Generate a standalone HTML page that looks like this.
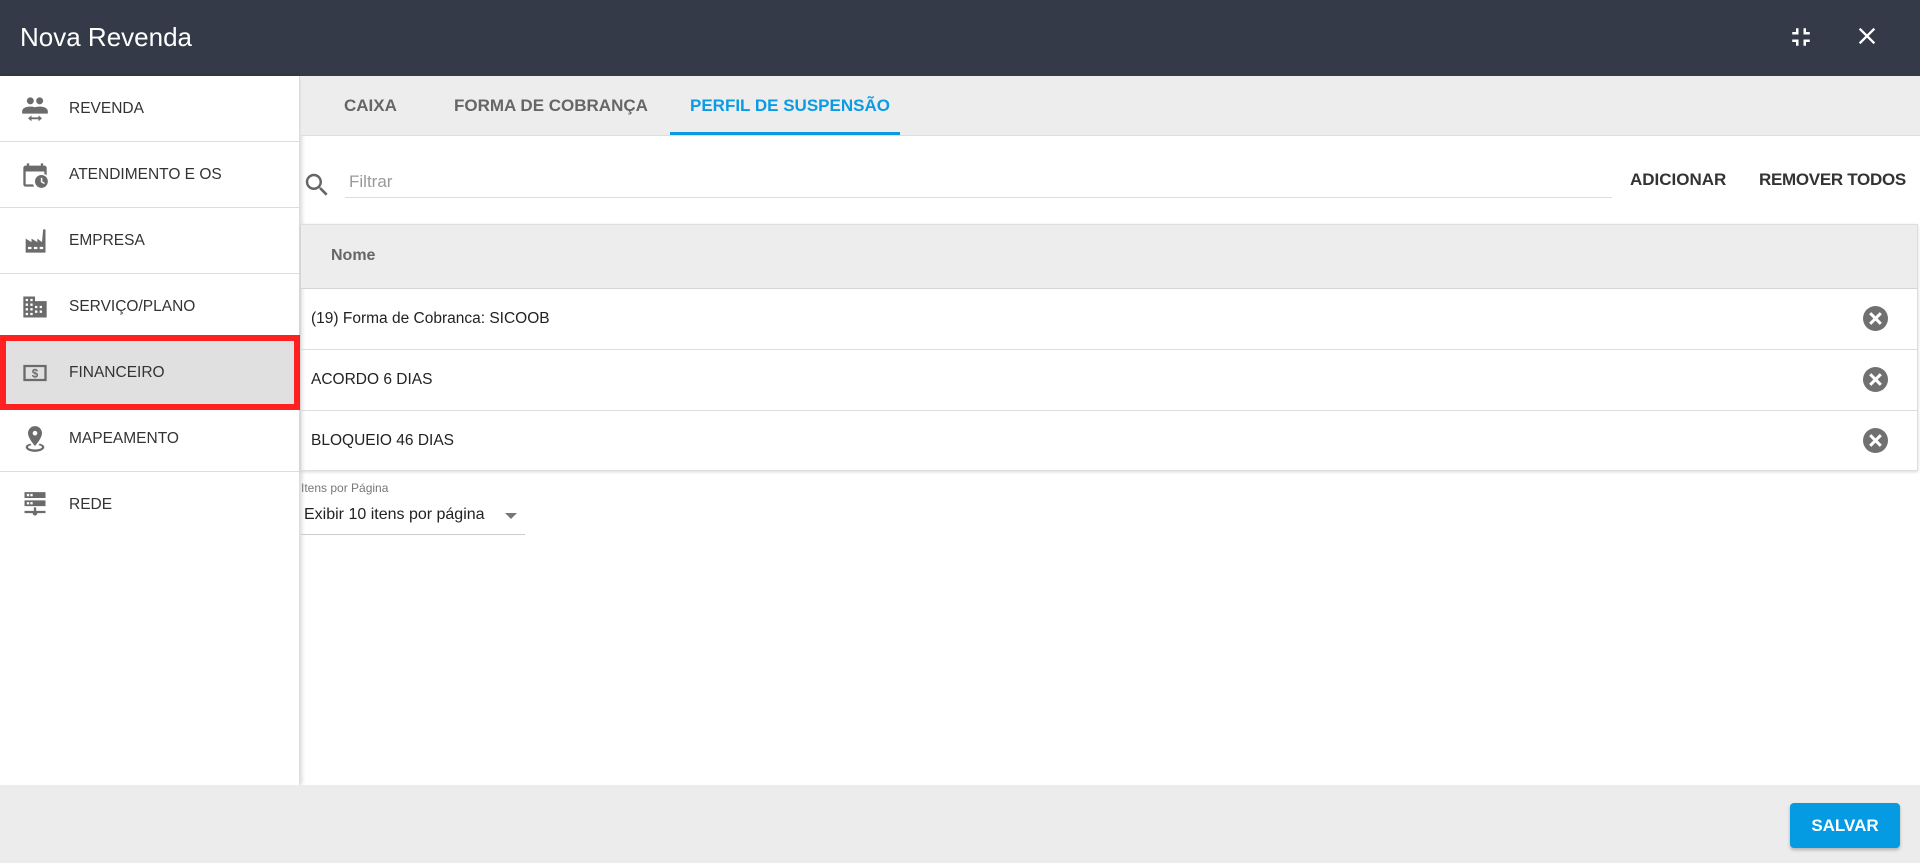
<!DOCTYPE html>
<html><head><meta charset="utf-8"><style>
*{box-sizing:border-box;margin:0;padding:0}
body{width:1920px;height:863px;overflow:hidden;font-family:"Liberation Sans",sans-serif;background:#fff;position:relative;color:#212121}
.hdr{position:absolute;left:0;top:0;width:1920px;height:76px;background:#353a48}
.hdr .t{position:absolute;left:20px;top:22px;font-size:26px;color:#fff}
.side{position:absolute;left:0;top:76px;width:300px;height:709px;background:#fff;border-right:1px solid #ddd;box-shadow:2px 0 4px rgba(0,0,0,.15)}
.it{position:absolute;left:0;width:300px;height:66px;border-bottom:1px solid #ddd}
.it svg{position:absolute;left:21px;top:19px;width:28px;height:28px;fill:#6b6b6b}
.it span{position:absolute;left:69px;top:24px;font-size:15.5px;color:#333}
.sel{position:absolute;left:0;top:259px;width:300px;height:75px;border:6px solid #ff2020;background:#e0e0e0}
.tabs{position:absolute;left:301px;top:76px;width:1619px;height:60px;background:#ededed;border-bottom:1px solid #ddd}
.tab{position:absolute;top:96px;font-size:17px;color:#666;font-weight:bold}
.ul{position:absolute;left:670px;top:132px;width:230px;height:3px;background:#0a9be3}
.btn{position:absolute;top:170px;font-size:17px;font-weight:bold;color:#333}
.tbl{position:absolute;left:301px;top:224px;width:1617px;height:247px;border:1px solid #ddd;border-left:none;box-shadow:0 1px 3px rgba(0,0,0,.15)}
.th{height:64px;background:#ededed;border-bottom:1px solid #d4d4d4;position:relative}
.th span{position:absolute;left:30px;top:22px;font-size:16px;font-weight:bold;color:#666}
.tr{height:61px;border-bottom:1px solid #ddd;position:relative}
.tr span{position:absolute;left:10px;top:21px;font-size:15.5px;color:#222}
.tr i{position:absolute;left:1562px;top:17px;width:25px;height:25px;border-radius:50%;background:#707070}
.tr i:before,.tr i:after{content:"";position:absolute;left:11px;top:5px;width:3px;height:15px;background:#fff;transform:rotate(45deg)}
.tr i:after{transform:rotate(-45deg)}
.foot{position:absolute;left:0;top:785px;width:1920px;height:78px;background:#ececec}
.save{position:absolute;left:1790px;top:803px;width:110px;height:45px;background:#049be3;border-radius:4px;color:#fff;font-weight:bold;font-size:17px;text-align:center;line-height:45px;box-shadow:0 2px 3px rgba(0,0,0,.25)}
</style></head><body>
<div class="hdr"><div class="t">Nova Revenda</div>
<svg style="position:absolute;left:1786px;top:22px" width="30" height="30" viewBox="0 0 24 24" fill="#fff"><path d="M5 16h3v3h2v-5H5v2zm3-8H5v2h5V5H8v3zm6 11h2v-3h3v-2h-5v5zm2-11V5h-2v5h5V8h-3z"/></svg>
<svg style="position:absolute;left:1853px;top:22px" width="28" height="28" viewBox="0 0 24 24" fill="#fff"><path d="M19 6.41L17.59 5 12 10.59 6.41 5 5 6.41 10.59 12 5 17.59 6.41 19 12 13.41 17.59 19 19 17.59 13.41 12z"/></svg>
</div>
<div class="side">
<div class="it" style="top:0"><svg viewBox="0 0 24 24"><circle cx="8" cy="5" r="3"/><circle cx="16" cy="5" r="3"/><path d="M1 14c0-3 4-4 7-4s4 .6 4 .6.9-.6 4-.6 7 1 7 4v2H1z"/><path d="M6 20l3-2.5v1.7h6v-1.7l3 2.5-3 2.5v-1.7H9v1.7z"/></svg><span>REVENDA</span></div>
<div class="it" style="top:66px"><svg viewBox="0 0 24 24"><path d="M17 2v2H7V2H5v2H4c-1.1 0-2 .9-2 2v14c0 1.1.9 2 2 2h7.3a7 7 0 0 1-.9-2H4V9h16v2.3a7 7 0 0 1 2 .9V6c0-1.1-.9-2-2-2h-1V2z"/><circle cx="17.5" cy="17.5" r="5.5"/><path d="M17 14.5h1.3v3l2.2 1.3-.6 1-2.9-1.7z" fill="#fff"/></svg><span>ATENDIMENTO E OS</span></div>
<div class="it" style="top:132px"><svg viewBox="0 0 24 24"><path d="M21 2h-2l-1 11-4-3v3L9 10v3L4 10v12h17zM6 17h3v2H6zm5 0h3v2h-3zm5 0h3v2h-3z" fill-rule="evenodd"/></svg><span>EMPRESA</span></div>
<div class="it" style="top:198px"><svg viewBox="0 0 24 24"><path d="M2 3h10v4h10v14H2zM4 5v2h2V5zm4 0v2h2V5zM4 9v2h2V9zm4 0v2h2V9zm4 2v2h2v-2zm4 0v2h2v-2zM4 13v2h2v-2zm4 0v2h2v-2zm4 2v2h2v-2zm4 0v2h2v-2zM4 17v2h2v-2zm4 0v2h2v-2z" fill-rule="evenodd"/></svg><span>SERVIÇO/PLANO</span></div>
<div class="sel"></div>
<div class="it" style="top:264px;border:none"><svg viewBox="0 0 24 24"><path d="M2 5h20v14H2zm2 2v10h16V7z" fill-rule="evenodd"/><text x="12" y="16" font-size="10" font-weight="bold" text-anchor="middle" font-family="Liberation Sans" fill="#6b6b6b">$</text></svg><span>FINANCEIRO</span></div>
<div class="it" style="top:330px"><svg viewBox="0 0 24 24"><path d="M12 1a6 6 0 0 0-6 6c0 4.5 6 11 6 11s6-6.5 6-11a6 6 0 0 0-6-6zm0 8a2 2 0 1 1 0-4 2 2 0 0 1 0 4z"/><path d="M4 19c0-1.5 2-2.5 4-3l1 1.3c-2 .4-3 1.1-3 1.7 0 1 2.7 2 6 2s6-1 6-2c0-.6-1-1.3-3-1.7l1-1.3c2 .5 4 1.5 4 3 0 2.2-3.6 4-8 4s-8-1.8-8-4z"/></svg><span>MAPEAMENTO</span></div>
<div class="it" style="top:396px;border:none"><svg viewBox="0 0 24 24"><path d="M3 1h18v5H3zm2 1.5v2h2v-2zm3 0v2h2v-2zM3 8h18v5H3zm2 1.5v2h2v-2zm3 0v2h2v-2zM11 14h2v3h8v2h-7a2 2 0 0 1-4 0H3v-2h8z" fill-rule="evenodd"/></svg><span>REDE</span></div>
</div>
<div class="tabs"></div>
<div class="tab" style="left:344px">CAIXA</div>
<div class="tab" style="left:454px">FORMA DE COBRANÇA</div>
<div class="tab" style="left:690px;color:#0a9be3">PERFIL DE SUSPENSÃO</div>
<div class="ul"></div>
<svg style="position:absolute;left:302px;top:170px" width="30" height="30" viewBox="0 0 24 24" fill="#666"><path d="M15.5 14h-.79l-.28-.27C15.41 12.59 16 11.11 16 9.5 16 5.91 13.09 3 9.5 3S3 5.91 3 9.5 5.91 16 9.5 16c1.61 0 3.09-.59 4.23-1.57l.27.28v.79l5 4.99L20.49 19l-4.99-5zm-6 0C7.01 14 5 11.99 5 9.5S7.01 5 9.5 5 14 7.01 14 9.5 11.99 14 9.5 14z"/></svg>
<div style="position:absolute;left:349px;top:172px;font-size:17px;color:#999">Filtrar</div>
<div style="position:absolute;left:345px;top:197px;width:1267px;height:1px;background:#ddd"></div>
<div class="btn" style="left:1630px">ADICIONAR</div>
<div class="btn" style="left:1759px;letter-spacing:-.3px">REMOVER TODOS</div>
<div class="tbl">
<div class="th"><span>Nome</span></div>
<div class="tr"><span>(19) Forma de Cobranca: SICOOB</span><i></i></div>
<div class="tr"><span>ACORDO 6 DIAS</span><i></i></div>
<div class="tr" style="border:none"><span>BLOQUEIO 46 DIAS</span><i></i></div>
</div>
<div style="position:absolute;left:301px;top:481px;font-size:12px;color:#777">Itens por Página</div>
<div style="position:absolute;left:304px;top:506px;font-size:16px;color:#222">Exibir 10 itens por página</div>
<div style="position:absolute;left:505px;top:513px;width:0;height:0;border-left:6px solid transparent;border-right:6px solid transparent;border-top:6px solid #777"></div>
<div style="position:absolute;left:301px;top:534px;width:224px;height:1px;background:#ccc"></div>
<div class="foot"></div>
<div class="save">SALVAR</div>
</body></html>
